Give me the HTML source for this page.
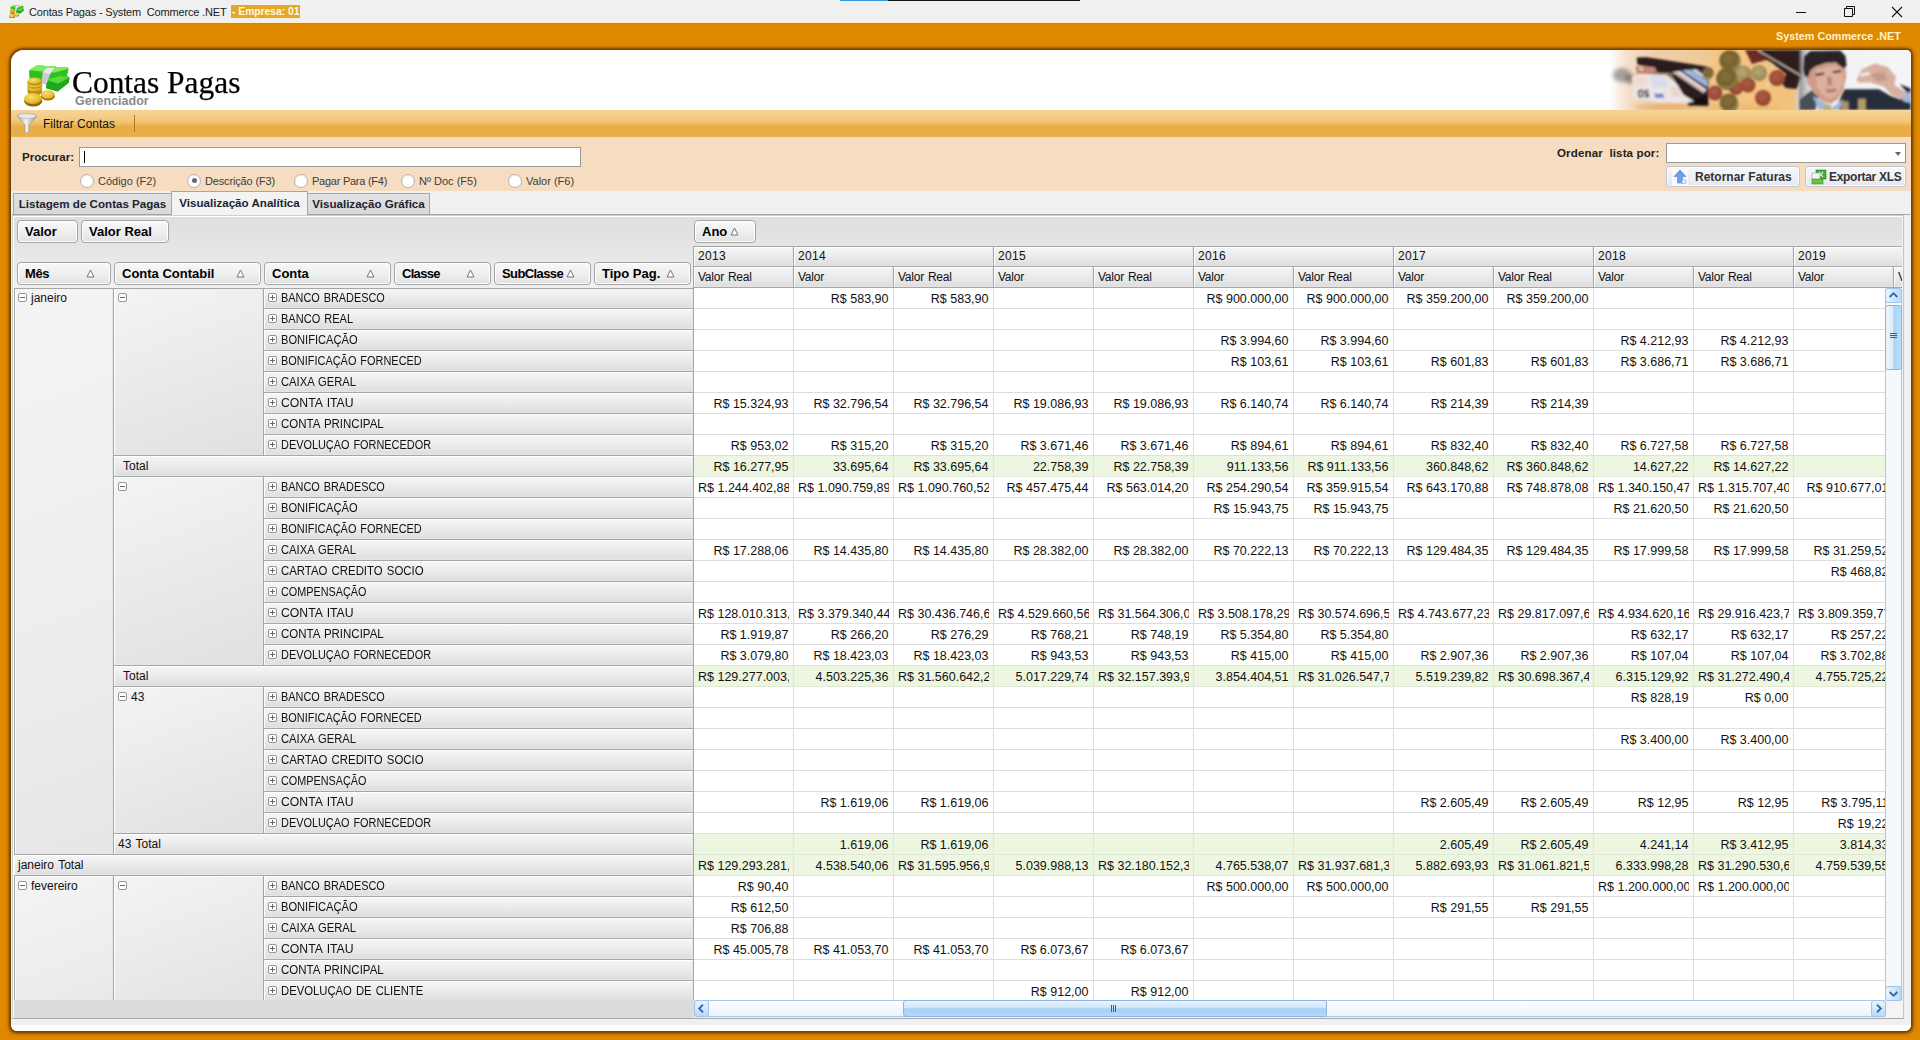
<!DOCTYPE html>
<html><head><meta charset="utf-8"><title>Contas Pagas</title>
<style>
*{box-sizing:border-box}
html,body{margin:0;padding:0}
body{width:1920px;height:1040px;overflow:hidden;position:relative;background:#e08800;font-family:"Liberation Sans",sans-serif;font-size:12px;color:#000}
div,span,i,b,svg{position:absolute}
#tb{left:0;top:0;width:1920px;height:24px;background:#f0f0f0;border-bottom:1px solid #c9851f;box-shadow:inset 0 -1px 0 #fff1c7}
#tb .t{left:29px;top:5px;font-size:11px;letter-spacing:-.17px;white-space:pre;color:#1a1a1a;line-height:15px}
#tb .e{left:231px;top:5px;height:13px;width:69px;background:#e5a825;color:#fff8e0;font-weight:bold;font-size:10.3px;line-height:13px;white-space:pre;padding-left:1px;overflow:hidden}
#sc{left:1776px;top:30px;font-size:10.8px;font-weight:bold;color:#fff2c6;white-space:pre;line-height:13px}
#panel{left:11px;top:50px;width:1900px;height:981px;background:#f0f0f0;border-radius:13px 5px 6px 6px;box-shadow:0 0 2.5px 1.2px rgba(92,52,0,.8),0 1px 5px 1px rgba(110,60,0,.5);overflow:hidden}
#hdr{left:0;top:0;width:1900px;height:60px;background:#fff}
#ttl{left:60.5px;top:14.5px;font-family:"Liberation Serif",serif;font-size:30.8px;line-height:36px;white-space:pre;color:#000;transform:scaleX(1.02);transform-origin:0 50%;-webkit-text-stroke:.25px #000}
#sub{left:64px;top:44px;font-size:12.5px;font-weight:bold;color:#8a8a8a;line-height:14px;white-space:pre}
#tool{left:0;top:60px;width:1900px;height:27px;background:linear-gradient(#f6d397 0,#f3c981 35%,#eeb85c 55%,#e9ac47 60%,#eaae4a 100%)}
#tool .t{left:32px;top:7px;font-size:12px;line-height:15px;white-space:pre;color:#111}
#tool .sep{left:123px;top:5px;width:1px;height:17px;background:#b07a20}
#srch{left:0;top:87px;width:1900px;height:54px;background:#f6ddc1}
.lb{font-weight:bold;font-size:11.6px;white-space:pre;color:#222;line-height:14px}
#inp{left:68px;top:97px;width:502px;height:20px;background:#fff;border:1px solid #9a9a9a}
#inp i{left:4px;top:3px;width:1px;height:12px;background:#000}
.rd{width:14px;height:14px;margin:-.5px 0 0 -1px;border-radius:50%;background:#fff;border:1px solid #b4b4b4;box-shadow:inset 0 1px 1px rgba(0,0,0,.08)}
.rd.on:after{content:"";position:absolute;left:3.5px;top:3.5px;width:5px;height:5px;border-radius:50%;background:#6a6a6a}
.rl{font-size:11px;white-space:pre;color:#3c3c3c;line-height:14px}
#cmb{left:1655px;top:93px;width:240px;height:20px;background:#fff;border:1px solid #9a9a9a}
#cmb:after{content:"";position:absolute;right:4px;top:8px;border:3.5px solid transparent;border-top:4px solid #666;border-bottom:0}
.btn{height:21px;top:116px;border:1px solid #c3c7d1;border-radius:3px;background:linear-gradient(#f7f8fa,#e6e8ee);box-shadow:inset 0 0 0 1px rgba(255,255,255,.7)}
.btn b{font-size:12px;white-space:pre;color:#333;line-height:19px;top:1px}
.tab{top:143px;height:22px;background:linear-gradient(#e2e2e2,#d8d8d8);border:1px solid #a6a6a6;border-bottom:0;font-weight:bold;font-size:11.6px;white-space:pre;color:#1c2433;line-height:20px;text-align:center}
.tab.on{top:141px;height:24px;background:#f3f3f3;line-height:21px;z-index:3}
#tl{left:1px;top:164px;width:1898px;height:1px;background:#a2a2a2}
/* grid */
#grid{left:0;top:0;width:1920px;height:1040px}
#gbg{left:12px;top:215px;width:1892px;height:804px;background:#f0f0f0;border:1px solid #cfcfcf;border-bottom-color:#a8a8a8;border-right-color:#c6c6c6}
#ghd{left:14px;top:217px;width:1888px;height:71px;background:linear-gradient(#dedede,#efefef)}
#ghw{left:13px;top:216px;width:1890px;height:1px;background:#fff}
#ghl{left:13px;top:216px;width:1px;height:802px;background:#fff}
#data{left:694px;top:288px;width:1192px;height:712px;overflow:hidden;background:#fff}
#dl{left:693px;top:246px;width:1px;height:755px;background:#a6a6a6}
.dr{left:0;height:21px;width:1300px}
.c{position:relative;float:left;width:100px;height:21px;border-right:1px solid #dedede;border-bottom:1px solid #dedede;padding:0 4px;font-size:12.5px;line-height:20px;color:#111}
.c span{position:static;display:block;overflow:hidden;white-space:pre;text-align:right;height:20px;line-height:22px}
.c span{padding-right:.5px}
.c.o span{text-align:left;padding-right:0}
.tot .c{background:#ecf6e0;border-color:#dfe8d5}
#rh{left:14px;top:288px;width:680px;height:712px;overflow:hidden;background:#e9e9e9}
.h{word-spacing:1px;background:linear-gradient(#f6f6f6,#ececec 45%,#dddddd);border:1px solid #a6a6a6;border-left:0;border-top:0;box-shadow:inset 1px 1px 0 #fff,inset -1px -1px 0 #e6e6e6;white-space:pre;line-height:20px;font-size:12px;color:#111}
#rh .h{border-top:1px solid #a6a6a6;margin-top:0}
.ct{left:250px;width:430px;height:22px}
.t1{left:100px;width:580px;height:22px}
.t0{left:0;width:680px;height:22px}
.cc{left:100px;width:150px;background:linear-gradient(160deg,#f4f4f4,#e6e6e6 70%,#e0e0e0)}
.ms{left:0;width:100px;background:linear-gradient(160deg,#f4f4f4,#ececec 70%,#e6e6e6);border-left:1px solid #a6a6a6}
.l{left:4px;top:0}
.ct .u{left:17px;top:0;transform:scaleX(.908);transform-origin:0 50%}
.t1 .l{left:9px;top:0}
.t1b .l{left:4px;top:0}
.t0 .l{left:4px;top:0}
.cc .l,.ms .l{left:17px;top:0}
.ms .pm{left:3px}
.ms .l{left:16px}
.pm{left:4px;top:5px;width:9px;height:9px;border:1px solid #969696;border-radius:2px;background:#fff}
.pm:before{content:"";position:absolute;left:1px;top:3px;width:5px;height:1px;background:#666}
.pm.p:after{content:"";position:absolute;left:3px;top:1px;width:1px;height:5px;background:#666}
#chdr{left:694px;top:246px;width:1208px;height:42px;overflow:hidden;border-top:1px solid #a6a6a6}
.yh{top:0;height:20px;line-height:18px;letter-spacing:.3px}
.vh{top:20px;height:21px;width:100px;line-height:21px;letter-spacing:-.25px}
.fb{height:23px;border:1px solid #a4a4a4;border-radius:4px;background:linear-gradient(#f8f8f8,#efefef 50%,#e2e2e2);box-shadow:inset 0 0 0 1px #fff}
.fb b{left:7px;top:0;font-size:13px;line-height:21px;white-space:pre;color:#000}
.fb .tri{top:6px}

</style></head>
<body>
<div id="tb">
<svg style="left:9px;top:4.5px" width="15" height="13.7" viewBox="24 65 46 42"><use href="#bigicon"/></svg>
<span class="t">Contas Pagas - System  Commerce .NET</span>
<span class="e">- Empresa: 01</span>
<div style="left:840px;top:0;width:48px;height:1px;background:#2f9be0"></div>
<div style="left:888px;top:0;width:192px;height:1px;background:#111"></div>
<svg style="left:1790px;top:2px" width="120" height="20" viewBox="0 0 120 20"><g stroke="#111" stroke-width="1" fill="none"><path d="M6 10.5 H16"/><path d="M54.5 6.5 H62.5 V14.5 H54.5 Z"/><path d="M56.5 6.5 V4.5 H64.5 V12.5 H62.5"/><path d="M102 5 L112 15 M112 5 L102 15" stroke-width="1.1"/></g></svg>
</div>
<span id="sc">System Commerce .NET</span>
<div id="panel">
<div id="hdr">
<svg style="left:11px;top:12px" width="50" height="48" viewBox="22 62 50 48">
<defs><linearGradient id="gg" x1="0" y1="0" x2="0" y2="1"><stop offset="0" stop-color="#5fe03c"/><stop offset="1" stop-color="#1fa51a"/></linearGradient><radialGradient id="gc" cx=".4" cy=".35" r=".75"><stop offset="0" stop-color="#f8e068"/><stop offset=".7" stop-color="#e3b92e"/><stop offset="1" stop-color="#a87c10"/></radialGradient><filter id="ib"><feGaussianBlur stdDeviation=".35"/></filter></defs>
<g id="bigicon" filter="url(#ib)">
<path d="M29.4 70 L36.4 65.4 L43.9 65.4 L45 66.3 L55.4 66.3 L56.5 67.1 L67.5 67.1 L68.7 68.6 L66.9 75.2 L69.5 77.5 L68.7 82.7 L57.7 91.4 L46.2 88.2 L46.2 83.9 L29.4 78.7 Z" fill="url(#gg)"/>
<path d="M29.4 70 L36.4 65.4 L43.9 65.4 L45 66.3 L55.4 66.3 L56.5 67.1 L67.5 67.1 L68.7 68.6 L54 72.5 Z" fill="#7cec5a"/>
<path d="M29.4 70.6 L54 73 L68.5 69 L66.9 75.2 L52 79 L29.4 76 Z" fill="#2fc024"/>
<path d="M46.5 80.5 L58 84 L69.5 77.5 L68.7 82.7 L57.7 91.4 L46.2 88.2 Z" fill="#1faa1c"/>
<path d="M47 79.5 L60 76 L69 77.4 L58 83.6 Z" fill="#58dc3e"/>
<path d="M42.7 72.3 L47.3 67.7 L54.2 68.3 L50.2 74 L46.2 85 L41.5 83.3 Z" fill="#c9cbcf"/>
<path d="M42.7 72.3 L47.3 67.7 L54.2 68.3 L50.2 74 Z" fill="#e6e7ea"/>
<rect x="27.6" y="81" width="14.5" height="11" fill="#d9a820"/>
<ellipse cx="34.8" cy="92" rx="7.3" ry="3.4" fill="#b88a14"/>
<ellipse cx="34.8" cy="89" rx="7.3" ry="3.4" fill="#c8981a"/><ellipse cx="34.8" cy="87.8" rx="7.3" ry="3.4" fill="url(#gc)"/>
<ellipse cx="34.8" cy="85.6" rx="7.3" ry="3.4" fill="#c8981a"/><ellipse cx="34.8" cy="84.4" rx="7.3" ry="3.4" fill="url(#gc)"/>
<ellipse cx="34.6" cy="82.2" rx="7" ry="3.2" fill="#b88a14"/><ellipse cx="34.6" cy="81" rx="7" ry="3.2" fill="url(#gc)"/>
<ellipse cx="47.9" cy="96.2" rx="6.9" ry="4.4" fill="#96700c"/><ellipse cx="47.9" cy="94.6" rx="6.9" ry="4.4" fill="url(#gc)"/>
<ellipse cx="33.2" cy="101.2" rx="9" ry="5.4" fill="#8c680a"/><ellipse cx="32.9" cy="98.6" rx="8.8" ry="5.6" fill="url(#gc)"/>
</g>
</svg>
<span id="ttl">Contas Pagas</span>
<span id="sub">Gerenciador</span>
<!--BANNER--><svg id="ban" style="left:1589px;top:0" width="311" height="60" viewBox="1600 50 311 60">
<defs>
<filter id="b1" x="-10%" y="-10%" width="120%" height="120%"><feGaussianBlur stdDeviation="0.8"/></filter>
<filter id="b2" x="-30%" y="-30%" width="160%" height="160%"><feGaussianBlur stdDeviation="2.2"/></filter>
<linearGradient id="bl" x1="0" y1="0" x2="1" y2="0"><stop offset="0" stop-color="#fff"/><stop offset=".03" stop-color="#fff"/><stop offset=".09" stop-color="#f5e0c9"/><stop offset=".18" stop-color="#eecfac"/><stop offset=".33" stop-color="#efc998"/><stop offset=".38" stop-color="#f2c684"/><stop offset=".62" stop-color="#f1c27c"/><stop offset=".645" stop-color="#d8d4d2"/><stop offset=".7" stop-color="#f1f1f3"/><stop offset="1" stop-color="#f5f5f7"/></linearGradient>
<linearGradient id="ms" x1="0" y1="0" x2="1" y2="0"><stop offset="0" stop-color="#77787e" stop-opacity=".75"/><stop offset="1" stop-color="#c0c0c6" stop-opacity="0"/></linearGradient>
<radialGradient id="cg" cx=".45" cy=".4" r=".6"><stop offset="0" stop-color="#86703c"/><stop offset=".68" stop-color="#74602f"/><stop offset=".86" stop-color="#a48c4c"/><stop offset="1" stop-color="#5e4c22"/></radialGradient>
<radialGradient id="cl" cx=".45" cy=".4" r=".6"><stop offset="0" stop-color="#b8aa74"/><stop offset="1" stop-color="#968650"/></radialGradient>
<radialGradient id="cc" cx=".45" cy=".4" r=".6"><stop offset="0" stop-color="#ac5e46"/><stop offset="1" stop-color="#92452e"/></radialGradient>
<clipPath id="bc"><rect x="1600" y="50" width="311" height="60"/></clipPath>
</defs>
<g clip-path="url(#bc)">
<rect x="1600" y="50" width="311" height="60" fill="url(#bl)"/>
<g filter="url(#b2)"><ellipse cx="1622" cy="75" rx="9" ry="7" fill="#8a8686" opacity=".75"/><ellipse cx="1630" cy="79" rx="5" ry="5" fill="#6e6a6a" opacity=".7"/><ellipse cx="1665" cy="107" rx="32" ry="3" fill="#e39a44" opacity=".6"/><path d="M1640 60 L1700 68 L1708 76 L1707 104 L1690 102 L1672 80 L1645 72 Z" fill="#2b1c1b" opacity=".55"/><ellipse cx="1740" cy="108" rx="40" ry="4" fill="#eeb060" opacity=".5"/></g>
<g filter="url(#b1)">
<path d="M1636.7 57.6 L1646.7 57.2 L1707.5 66.8 L1707.5 73.0 L1675.0 72.2 L1658.3 72.2 L1655.0 67.2 L1637.5 64.7 Z" fill="#2b1c1b"/>
<path d="M1670.8 70.5 L1707.5 69.7 L1708.3 105.5 L1698.3 105.5 L1683.3 94.7 L1678.3 87.2 Z" fill="#2b1c1b"/>
<path d="M1686.7 101.3 L1707.5 94.7 L1708.3 105.5 L1688.3 105.5 Z" fill="#1a1010"/>
<path d="M1635.8 65.9 L1655.0 67.6 L1654.6 73.0 L1636.7 73.8 Z" fill="#c08078"/>
<path d="M1639.2 67.6 L1643.3 67.8 L1643.3 70.5 L1639.2 70.3 Z" fill="#e8d0b0"/>
<path d="M1646.7 68.0 L1653.3 68.5 L1653.3 70.5 L1646.7 70.3 Z" fill="#e08a70"/>
<path d="M1672.5 72.2 L1680.0 70.9 L1706.7 89.7 L1703.3 93.0 Z" fill="#e6dcdc"/>
<path d="M1675.0 73.8 L1677.5 73.0 L1704.2 91.3 L1703.3 93.0 Z" fill="#c8a8a8"/>
<path d="M1681.7 70.5 L1690.0 69.7 L1707.5 81.3 L1707.5 87.2 Z" fill="#9dbadf"/>
<path d="M1690.8 69.7 L1696.7 69.5 L1707.5 76.3 L1707.5 80.5 Z" fill="#e2e4ec"/>
<path d="M1695.8 70.3 L1704.2 73.0 L1707.5 75.9 L1707.5 77.2 Z" fill="#3456a6"/>
<path d="M1632.1 76.3 L1646.7 74.7 L1666.7 74.7 L1677.5 84.7 L1683.3 94.7 L1694.2 101.3 L1686.7 103.0 L1658.3 102.2 L1633.3 98.0 Z" fill="#ebe5e5"/>
<path d="M1632.9 77.2 L1646.7 75.5 L1647.5 84.7 L1633.3 86.3 Z" fill="#f0dccc"/>
<path d="M1650.0 76.3 L1665.0 76.3 L1668.3 87.2 L1653.3 87.2 Z" fill="#d8dcee"/>
<path d="M1670.0 86.3 L1677.5 87.2 L1681.7 97.2 L1672.5 96.3 Z" fill="#ecd2ca"/>
<path d="M1637.9 90.5 L1641.7 89.2 L1643.3 91.3 L1643.3 96.8 L1639.6 97.8 L1637.9 95.5 Z" fill="#38302f"/>
<path d="M1639.6 91.3 L1641.7 90.9 L1641.8 95.9 L1639.8 96.3 Z" fill="#ebe5e5"/>
<path d="M1644.6 90.1 L1648.8 89.7 L1648.8 91.3 L1646.2 91.7 L1646.3 93.0 L1649.2 93.4 L1649.0 97.2 L1644.6 97.6 L1644.6 95.9 L1647.3 95.5 L1647.2 94.7 L1644.6 94.3 Z" fill="#38302f"/>
<path d="M1654.2 93.4 L1663.3 93.8 L1664.2 98.0 L1655.0 97.8 Z" fill="#7686d0"/>
<circle cx="1708" cy="73" r="6" fill="url(#cg)"/>
<path d="M1745 50 L1801 50 L1801.5 76 L1796.5 89 L1786 88 L1782.5 84 L1786 74 L1770.6 61.7 Z" fill="#2d1c1a"/>
<path d="M1745 50 L1760 50 L1766 60 L1752 64 Z" fill="#6a2c28"/>
<path d="M1758 50.5 L1801.5 76" stroke="#d8d0cc" stroke-width="1.2" fill="none"/>
<circle cx="1769.8" cy="67.8" r="2.4" fill="#e0c4a8"/>
<circle cx="1730" cy="61" r="10.8" fill="url(#cg)"/>
<circle cx="1743" cy="74" r="8.5" fill="url(#cl)"/>
<circle cx="1748" cy="85" r="7.5" fill="url(#cc)"/>
<circle cx="1736" cy="88" r="7" fill="url(#cc)"/>
<circle cx="1727" cy="79" r="11" fill="url(#cg)"/>
<circle cx="1715" cy="93" r="7.5" fill="url(#cc)"/>
<circle cx="1729" cy="103" r="9.5" fill="url(#cg)"/>
<circle cx="1759" cy="73" r="8" fill="url(#cl)"/>
<circle cx="1777" cy="78" r="8" fill="url(#cc)"/>
<circle cx="1763" cy="98" r="8" fill="url(#cc)"/>
<circle cx="1767.5" cy="84" r="1.7" fill="#d8d8d8"/>
<circle cx="1759" cy="98" r="0" fill="#000"/>
</g>
<g filter="url(#b1)">
<rect x="1799" y="50" width="14" height="60" fill="url(#ms)"/>
<path d="M1799.8 99.5 L1811.9 90.1 L1818.7 96.1 L1815.3 109.9 L1799.8 109.9 Z" fill="#4a4f58"/>
<path d="M1835.9 109.9 L1841.1 96.1 L1844.5 89.2 L1878.9 89.2 L1890.9 96.1 L1910.7 103.0 L1910.7 109.9 Z" fill="#262f3b"/>
<path d="M1812.7 96.1 L1818.7 109.9 L1839.3 109.9 L1843.6 98.7 L1832.5 107.3 Z" fill="#a3b8d8"/>
<path d="M1805.0 72.1 L1810.1 65.2 L1835.9 60.9 L1845.4 65.2 L1846.2 76.4 L1843.6 89.2 L1837.6 99.5 L1830.8 103.8 L1822.2 101.3 L1813.6 92.7 L1807.6 82.4 Z" fill="#cc9c88"/>
<path d="M1815.3 70.3 L1835.9 65.2 L1843.6 70.3 L1843.6 82.4 L1837.6 94.4 L1829.9 99.5 L1823.0 96.1 L1817.0 87.5 Z" fill="#dcb09c"/>
<path d="M1805.0 76.4 L1803.3 70.3 L1804.1 56.6 L1810.1 51.0 L1840.2 50.4 L1845.4 55.7 L1846.6 66.0 L1843.2 68.6 L1835.9 62.2 L1825.6 63.0 L1815.3 66.5 L1810.1 70.8 L1808.4 76.8 Z" fill="#2c2325"/>
<path d="M1815.3 73.8 L1823.9 72.5 L1824.3 74.6 L1816.2 75.9 Z" fill="#3a2a28"/>
<path d="M1832.5 71.2 L1841.1 69.9 L1841.5 72.1 L1833.3 73.3 Z" fill="#3a2a28"/>
<path d="M1827.3 76.4 L1830.8 76.4 L1832.5 84.9 L1827.3 85.8 Z" fill="#b88674"/>
<path d="M1825.6 89.2 L1836.8 88.4 L1835.9 91.8 L1827.3 92.7 Z" fill="#b87878"/>
<path d="M1856.5 79.8 L1861.7 69.5 L1874.6 63.5 L1887.5 66.9 L1896.0 76.4 L1894.3 84.9 L1907.2 92.7 L1901.2 99.5 L1890.9 94.4 L1884.0 86.7 L1870.3 82.4 L1858.2 82.4 Z" fill="#d8b0a0"/>
<path d="M1870.3 73.8 L1884.0 72.1 L1887.5 80.6 L1877.1 81.5 Z" fill="#c49a88"/>
<path d="M1860.4 73.8 L1869.4 72.1 L1869.8 74.6 L1860.8 76.4 Z" fill="#f6f2f2"/>
<path d="M1899.5 84.1 L1910.7 88.4 L1910.7 103.8 L1901.2 99.5 L1907.2 92.7 Z" fill="#222a36"/>
<path d="M1901.2 94.8 L1910.7 91.8 L1910.7 103.0 L1903.4 101.3 Z" fill="#a9b9d6"/>
<rect x="1823.9" y="104.7" width="7" height="6" fill="#c0ac78"/>
<rect x="1841.1" y="101.3" width="7.5" height="9" fill="#a8926a"/>
<rect x="1858.2" y="98.7" width="7.5" height="12" fill="#b49c6a"/>
</g>
</g>
</svg><!--/BANNER-->
</div>
<div id="tool">
<svg style="left:5px;top:2px" width="22" height="23" viewBox="0 0 22 23"><defs><linearGradient id="fg" x1="0" y1="0" x2="1" y2="0"><stop offset="0" stop-color="#9a9a9a"/><stop offset=".45" stop-color="#f4f4f4"/><stop offset="1" stop-color="#8c8c8c"/></linearGradient></defs><path d="M1 4 C1 1.5 21 1.5 21 4 L13 13 L13 20 C13 21.5 9 21.5 9 20 L9 13 Z" fill="url(#fg)" stroke="#8a8a8a" stroke-width=".5"/><ellipse cx="11" cy="4" rx="9.5" ry="2.3" fill="#e9e9e9" stroke="#a0a0a0" stroke-width=".5"/></svg>
<span class="t">Filtrar Contas</span>
<div class="sep"></div>
</div>
<div id="srch"></div>
<span class="lb" style="left:11px;top:100px">Procurar:</span>
<div id="inp"><i></i></div>
<div class="rd" style="left:70px;top:124px"></div><span class="rl" style="left:87px;top:124px">Código (F2)</span>
<div class="rd on" style="left:177px;top:124px"></div><span class="rl" style="left:194px;top:124px;letter-spacing:-.15px">Descrição (F3)</span>
<div class="rd" style="left:284px;top:124px"></div><span class="rl" style="left:301px;top:124px;letter-spacing:-.25px">Pagar Para (F4)</span>
<div class="rd" style="left:391px;top:124px"></div><span class="rl" style="left:408px;top:124px">Nº Doc (F5)</span>
<div class="rd" style="left:498px;top:124px"></div><span class="rl" style="left:515px;top:124px">Valor (F6)</span>
<span class="lb" style="left:1546px;top:96px;letter-spacing:.1px">Ordenar  lista por:</span>
<div id="cmb"></div>
<div class="btn" style="left:1655px;width:134px"><svg style="left:5px;top:2px" width="16" height="16" viewBox="0 0 16 16"><rect x="0" y="0" width="16" height="16" fill="#fff" opacity=".7"/><path d="M8 1 L14 7.5 L10.5 7.5 L10.5 14 L5.5 14 L5.5 7.5 L2 7.5 Z" fill="#6d9fe8" stroke="#4a7fd0" stroke-width=".6"/><path d="M10 11 h4 v3.5 h-4z" fill="#e8eef8" stroke="#7a9ad0" stroke-width=".5"/></svg><b style="left:28px">Retornar Faturas</b></div>
<div class="btn" style="left:1794px;width:101px"><svg style="left:5px;top:2px" width="16" height="16" viewBox="0 0 16 16"><rect x="5" y="1" width="10" height="9" fill="#3fae3a" stroke="#2a7d28" stroke-width=".6"/><path d="M8 3 l4 5 M12 3 l-4 5" stroke="#e8ffe0" stroke-width="1.2"/><rect x="1" y="4" width="8" height="7" fill="#f4f4f4" stroke="#9a9a9a" stroke-width=".6"/><rect x="1" y="10" width="11" height="5" fill="#6cc04a" stroke="#3a8a2a" stroke-width=".6"/></svg><b style="left:23px;letter-spacing:-.3px">Exportar XLS</b></div>
<div class="tab" style="left:2px;width:159px">Listagem de Contas Pagas</div>
<div class="tab on" style="left:160px;width:137px">Visualização Analítica</div>
<div class="tab" style="left:296px;width:123px">Visualização Gráfica</div>
<div id="tl"></div>
<div style="left:0;top:975px;width:1900px;height:6px;background:#fff"></div>
</div>
<div id="grid">
<div id="gbg"></div><div id="ghd"></div><div id="ghw"></div><div id="ghl"></div><div id="dl"></div>
<div id="data">
<div class="dr" style="top:0px"><div class="c"></div><div class="c"><span>R$ 583,90</span></div><div class="c"><span>R$ 583,90</span></div><div class="c"></div><div class="c"></div><div class="c"><span>R$ 900.000,00</span></div><div class="c"><span>R$ 900.000,00</span></div><div class="c"><span>R$ 359.200,00</span></div><div class="c"><span>R$ 359.200,00</span></div><div class="c"></div><div class="c"></div><div class="c"></div><div class="c"></div></div>
<div class="dr" style="top:21px"><div class="c"></div><div class="c"></div><div class="c"></div><div class="c"></div><div class="c"></div><div class="c"></div><div class="c"></div><div class="c"></div><div class="c"></div><div class="c"></div><div class="c"></div><div class="c"></div><div class="c"></div></div>
<div class="dr" style="top:42px"><div class="c"></div><div class="c"></div><div class="c"></div><div class="c"></div><div class="c"></div><div class="c"><span>R$ 3.994,60</span></div><div class="c"><span>R$ 3.994,60</span></div><div class="c"></div><div class="c"></div><div class="c"><span>R$ 4.212,93</span></div><div class="c"><span>R$ 4.212,93</span></div><div class="c"></div><div class="c"></div></div>
<div class="dr" style="top:63px"><div class="c"></div><div class="c"></div><div class="c"></div><div class="c"></div><div class="c"></div><div class="c"><span>R$ 103,61</span></div><div class="c"><span>R$ 103,61</span></div><div class="c"><span>R$ 601,83</span></div><div class="c"><span>R$ 601,83</span></div><div class="c"><span>R$ 3.686,71</span></div><div class="c"><span>R$ 3.686,71</span></div><div class="c"></div><div class="c"></div></div>
<div class="dr" style="top:84px"><div class="c"></div><div class="c"></div><div class="c"></div><div class="c"></div><div class="c"></div><div class="c"></div><div class="c"></div><div class="c"></div><div class="c"></div><div class="c"></div><div class="c"></div><div class="c"></div><div class="c"></div></div>
<div class="dr" style="top:105px"><div class="c"><span>R$ 15.324,93</span></div><div class="c"><span>R$ 32.796,54</span></div><div class="c"><span>R$ 32.796,54</span></div><div class="c"><span>R$ 19.086,93</span></div><div class="c"><span>R$ 19.086,93</span></div><div class="c"><span>R$ 6.140,74</span></div><div class="c"><span>R$ 6.140,74</span></div><div class="c"><span>R$ 214,39</span></div><div class="c"><span>R$ 214,39</span></div><div class="c"></div><div class="c"></div><div class="c"></div><div class="c"></div></div>
<div class="dr" style="top:126px"><div class="c"></div><div class="c"></div><div class="c"></div><div class="c"></div><div class="c"></div><div class="c"></div><div class="c"></div><div class="c"></div><div class="c"></div><div class="c"></div><div class="c"></div><div class="c"></div><div class="c"></div></div>
<div class="dr" style="top:147px"><div class="c"><span>R$ 953,02</span></div><div class="c"><span>R$ 315,20</span></div><div class="c"><span>R$ 315,20</span></div><div class="c"><span>R$ 3.671,46</span></div><div class="c"><span>R$ 3.671,46</span></div><div class="c"><span>R$ 894,61</span></div><div class="c"><span>R$ 894,61</span></div><div class="c"><span>R$ 832,40</span></div><div class="c"><span>R$ 832,40</span></div><div class="c"><span>R$ 6.727,58</span></div><div class="c"><span>R$ 6.727,58</span></div><div class="c"></div><div class="c"></div></div>
<div class="dr tot" style="top:168px"><div class="c"><span>R$ 16.277,95</span></div><div class="c"><span>33.695,64</span></div><div class="c"><span>R$ 33.695,64</span></div><div class="c"><span>22.758,39</span></div><div class="c"><span>R$ 22.758,39</span></div><div class="c"><span>911.133,56</span></div><div class="c"><span>R$ 911.133,56</span></div><div class="c"><span>360.848,62</span></div><div class="c"><span>R$ 360.848,62</span></div><div class="c"><span>14.627,22</span></div><div class="c"><span>R$ 14.627,22</span></div><div class="c"></div><div class="c"></div></div>
<div class="dr" style="top:189px"><div class="c o"><span>R$ 1.244.402,88</span></div><div class="c o"><span>R$ 1.090.759,89</span></div><div class="c o"><span>R$ 1.090.760,52</span></div><div class="c"><span>R$ 457.475,44</span></div><div class="c"><span>R$ 563.014,20</span></div><div class="c"><span>R$ 254.290,54</span></div><div class="c"><span>R$ 359.915,54</span></div><div class="c"><span>R$ 643.170,88</span></div><div class="c"><span>R$ 748.878,08</span></div><div class="c o"><span>R$ 1.340.150,47</span></div><div class="c o"><span>R$ 1.315.707,40</span></div><div class="c"><span>R$ 910.677,01</span></div><div class="c"></div></div>
<div class="dr" style="top:210px"><div class="c"></div><div class="c"></div><div class="c"></div><div class="c"></div><div class="c"></div><div class="c"><span>R$ 15.943,75</span></div><div class="c"><span>R$ 15.943,75</span></div><div class="c"></div><div class="c"></div><div class="c"><span>R$ 21.620,50</span></div><div class="c"><span>R$ 21.620,50</span></div><div class="c"></div><div class="c"></div></div>
<div class="dr" style="top:231px"><div class="c"></div><div class="c"></div><div class="c"></div><div class="c"></div><div class="c"></div><div class="c"></div><div class="c"></div><div class="c"></div><div class="c"></div><div class="c"></div><div class="c"></div><div class="c"></div><div class="c"></div></div>
<div class="dr" style="top:252px"><div class="c"><span>R$ 17.288,06</span></div><div class="c"><span>R$ 14.435,80</span></div><div class="c"><span>R$ 14.435,80</span></div><div class="c"><span>R$ 28.382,00</span></div><div class="c"><span>R$ 28.382,00</span></div><div class="c"><span>R$ 70.222,13</span></div><div class="c"><span>R$ 70.222,13</span></div><div class="c"><span>R$ 129.484,35</span></div><div class="c"><span>R$ 129.484,35</span></div><div class="c"><span>R$ 17.999,58</span></div><div class="c"><span>R$ 17.999,58</span></div><div class="c"><span>R$ 31.259,52</span></div><div class="c"></div></div>
<div class="dr" style="top:273px"><div class="c"></div><div class="c"></div><div class="c"></div><div class="c"></div><div class="c"></div><div class="c"></div><div class="c"></div><div class="c"></div><div class="c"></div><div class="c"></div><div class="c"></div><div class="c"><span>R$ 468,82</span></div><div class="c"></div></div>
<div class="dr" style="top:294px"><div class="c"></div><div class="c"></div><div class="c"></div><div class="c"></div><div class="c"></div><div class="c"></div><div class="c"></div><div class="c"></div><div class="c"></div><div class="c"></div><div class="c"></div><div class="c"></div><div class="c"></div></div>
<div class="dr" style="top:315px"><div class="c o"><span>R$ 128.010.313,45</span></div><div class="c o"><span>R$ 3.379.340,44</span></div><div class="c o"><span>R$ 30.436.746,65</span></div><div class="c o"><span>R$ 4.529.660,56</span></div><div class="c o"><span>R$ 31.564.306,01</span></div><div class="c o"><span>R$ 3.508.178,29</span></div><div class="c o"><span>R$ 30.574.696,51</span></div><div class="c o"><span>R$ 4.743.677,23</span></div><div class="c o"><span>R$ 29.817.097,61</span></div><div class="c o"><span>R$ 4.934.620,16</span></div><div class="c o"><span>R$ 29.916.423,77</span></div><div class="c o"><span>R$ 3.809.359,77</span></div><div class="c"></div></div>
<div class="dr" style="top:336px"><div class="c"><span>R$ 1.919,87</span></div><div class="c"><span>R$ 266,20</span></div><div class="c"><span>R$ 276,29</span></div><div class="c"><span>R$ 768,21</span></div><div class="c"><span>R$ 748,19</span></div><div class="c"><span>R$ 5.354,80</span></div><div class="c"><span>R$ 5.354,80</span></div><div class="c"></div><div class="c"></div><div class="c"><span>R$ 632,17</span></div><div class="c"><span>R$ 632,17</span></div><div class="c"><span>R$ 257,22</span></div><div class="c"></div></div>
<div class="dr" style="top:357px"><div class="c"><span>R$ 3.079,80</span></div><div class="c"><span>R$ 18.423,03</span></div><div class="c"><span>R$ 18.423,03</span></div><div class="c"><span>R$ 943,53</span></div><div class="c"><span>R$ 943,53</span></div><div class="c"><span>R$ 415,00</span></div><div class="c"><span>R$ 415,00</span></div><div class="c"><span>R$ 2.907,36</span></div><div class="c"><span>R$ 2.907,36</span></div><div class="c"><span>R$ 107,04</span></div><div class="c"><span>R$ 107,04</span></div><div class="c"><span>R$ 3.702,88</span></div><div class="c"></div></div>
<div class="dr tot" style="top:378px"><div class="c o"><span>R$ 129.277.003,17</span></div><div class="c"><span>4.503.225,36</span></div><div class="c o"><span>R$ 31.560.642,21</span></div><div class="c"><span>5.017.229,74</span></div><div class="c o"><span>R$ 32.157.393,91</span></div><div class="c"><span>3.854.404,51</span></div><div class="c o"><span>R$ 31.026.547,71</span></div><div class="c"><span>5.519.239,82</span></div><div class="c o"><span>R$ 30.698.367,41</span></div><div class="c"><span>6.315.129,92</span></div><div class="c o"><span>R$ 31.272.490,41</span></div><div class="c"><span>4.755.725,22</span></div><div class="c"></div></div>
<div class="dr" style="top:399px"><div class="c"></div><div class="c"></div><div class="c"></div><div class="c"></div><div class="c"></div><div class="c"></div><div class="c"></div><div class="c"></div><div class="c"></div><div class="c"><span>R$ 828,19</span></div><div class="c"><span>R$ 0,00</span></div><div class="c"></div><div class="c"></div></div>
<div class="dr" style="top:420px"><div class="c"></div><div class="c"></div><div class="c"></div><div class="c"></div><div class="c"></div><div class="c"></div><div class="c"></div><div class="c"></div><div class="c"></div><div class="c"></div><div class="c"></div><div class="c"></div><div class="c"></div></div>
<div class="dr" style="top:441px"><div class="c"></div><div class="c"></div><div class="c"></div><div class="c"></div><div class="c"></div><div class="c"></div><div class="c"></div><div class="c"></div><div class="c"></div><div class="c"><span>R$ 3.400,00</span></div><div class="c"><span>R$ 3.400,00</span></div><div class="c"></div><div class="c"></div></div>
<div class="dr" style="top:462px"><div class="c"></div><div class="c"></div><div class="c"></div><div class="c"></div><div class="c"></div><div class="c"></div><div class="c"></div><div class="c"></div><div class="c"></div><div class="c"></div><div class="c"></div><div class="c"></div><div class="c"></div></div>
<div class="dr" style="top:483px"><div class="c"></div><div class="c"></div><div class="c"></div><div class="c"></div><div class="c"></div><div class="c"></div><div class="c"></div><div class="c"></div><div class="c"></div><div class="c"></div><div class="c"></div><div class="c"></div><div class="c"></div></div>
<div class="dr" style="top:504px"><div class="c"></div><div class="c"><span>R$ 1.619,06</span></div><div class="c"><span>R$ 1.619,06</span></div><div class="c"></div><div class="c"></div><div class="c"></div><div class="c"></div><div class="c"><span>R$ 2.605,49</span></div><div class="c"><span>R$ 2.605,49</span></div><div class="c"><span>R$ 12,95</span></div><div class="c"><span>R$ 12,95</span></div><div class="c"><span>R$ 3.795,11</span></div><div class="c"></div></div>
<div class="dr" style="top:525px"><div class="c"></div><div class="c"></div><div class="c"></div><div class="c"></div><div class="c"></div><div class="c"></div><div class="c"></div><div class="c"></div><div class="c"></div><div class="c"></div><div class="c"></div><div class="c"><span>R$ 19,22</span></div><div class="c"></div></div>
<div class="dr tot" style="top:546px"><div class="c"></div><div class="c"><span>1.619,06</span></div><div class="c"><span>R$ 1.619,06</span></div><div class="c"></div><div class="c"></div><div class="c"></div><div class="c"></div><div class="c"><span>2.605,49</span></div><div class="c"><span>R$ 2.605,49</span></div><div class="c"><span>4.241,14</span></div><div class="c"><span>R$ 3.412,95</span></div><div class="c"><span>3.814,33</span></div><div class="c"></div></div>
<div class="dr tot" style="top:567px"><div class="c o"><span>R$ 129.293.281,12</span></div><div class="c"><span>4.538.540,06</span></div><div class="c o"><span>R$ 31.595.956,91</span></div><div class="c"><span>5.039.988,13</span></div><div class="c o"><span>R$ 32.180.152,31</span></div><div class="c"><span>4.765.538,07</span></div><div class="c o"><span>R$ 31.937.681,31</span></div><div class="c"><span>5.882.693,93</span></div><div class="c o"><span>R$ 31.061.821,51</span></div><div class="c"><span>6.333.998,28</span></div><div class="c o"><span>R$ 31.290.530,61</span></div><div class="c"><span>4.759.539,55</span></div><div class="c"></div></div>
<div class="dr" style="top:588px"><div class="c"><span>R$ 90,40</span></div><div class="c"></div><div class="c"></div><div class="c"></div><div class="c"></div><div class="c"><span>R$ 500.000,00</span></div><div class="c"><span>R$ 500.000,00</span></div><div class="c"></div><div class="c"></div><div class="c o"><span>R$ 1.200.000,00</span></div><div class="c o"><span>R$ 1.200.000,00</span></div><div class="c"></div><div class="c"></div></div>
<div class="dr" style="top:609px"><div class="c"><span>R$ 612,50</span></div><div class="c"></div><div class="c"></div><div class="c"></div><div class="c"></div><div class="c"></div><div class="c"></div><div class="c"><span>R$ 291,55</span></div><div class="c"><span>R$ 291,55</span></div><div class="c"></div><div class="c"></div><div class="c"></div><div class="c"></div></div>
<div class="dr" style="top:630px"><div class="c"><span>R$ 706,88</span></div><div class="c"></div><div class="c"></div><div class="c"></div><div class="c"></div><div class="c"></div><div class="c"></div><div class="c"></div><div class="c"></div><div class="c"></div><div class="c"></div><div class="c"></div><div class="c"></div></div>
<div class="dr" style="top:651px"><div class="c"><span>R$ 45.005,78</span></div><div class="c"><span>R$ 41.053,70</span></div><div class="c"><span>R$ 41.053,70</span></div><div class="c"><span>R$ 6.073,67</span></div><div class="c"><span>R$ 6.073,67</span></div><div class="c"></div><div class="c"></div><div class="c"></div><div class="c"></div><div class="c"></div><div class="c"></div><div class="c"></div><div class="c"></div></div>
<div class="dr" style="top:672px"><div class="c"></div><div class="c"></div><div class="c"></div><div class="c"></div><div class="c"></div><div class="c"></div><div class="c"></div><div class="c"></div><div class="c"></div><div class="c"></div><div class="c"></div><div class="c"></div><div class="c"></div></div>
<div class="dr" style="top:693px"><div class="c"></div><div class="c"></div><div class="c"></div><div class="c"><span>R$ 912,00</span></div><div class="c"><span>R$ 912,00</span></div><div class="c"></div><div class="c"></div><div class="c"></div><div class="c"></div><div class="c"></div><div class="c"></div><div class="c"></div><div class="c"></div></div>
</div>
<div id="rh">
<div class="h ct" style="top:-1px"><i class="pm p"></i><span class="u" style="transform:scaleX(0.908)">BANCO BRADESCO</span></div>
<div class="h ct" style="top:20px"><i class="pm p"></i><span class="u" style="transform:scaleX(0.919)">BANCO REAL</span></div>
<div class="h ct" style="top:41px"><i class="pm p"></i><span class="u" style="transform:scaleX(0.926)">BONIFICAÇÃO</span></div>
<div class="h ct" style="top:62px"><i class="pm p"></i><span class="u" style="transform:scaleX(0.912)">BONIFICAÇÃO FORNECED</span></div>
<div class="h ct" style="top:83px"><i class="pm p"></i><span class="u" style="transform:scaleX(0.934)">CAIXA GERAL</span></div>
<div class="h ct" style="top:104px"><i class="pm p"></i><span class="u" style="transform:scaleX(1.019)">CONTA ITAU</span></div>
<div class="h ct" style="top:125px"><i class="pm p"></i><span class="u" style="transform:scaleX(0.958)">CONTA PRINCIPAL</span></div>
<div class="h ct" style="top:146px"><i class="pm p"></i><span class="u" style="transform:scaleX(0.909)">DEVOLUÇAO FORNECEDOR</span></div>
<div class="h t1" style="top:167px"><span class="l">Total</span></div>
<div class="h ct" style="top:188px"><i class="pm p"></i><span class="u" style="transform:scaleX(0.908)">BANCO BRADESCO</span></div>
<div class="h ct" style="top:209px"><i class="pm p"></i><span class="u" style="transform:scaleX(0.926)">BONIFICAÇÃO</span></div>
<div class="h ct" style="top:230px"><i class="pm p"></i><span class="u" style="transform:scaleX(0.912)">BONIFICAÇÃO FORNECED</span></div>
<div class="h ct" style="top:251px"><i class="pm p"></i><span class="u" style="transform:scaleX(0.934)">CAIXA GERAL</span></div>
<div class="h ct" style="top:272px"><i class="pm p"></i><span class="u" style="transform:scaleX(0.95)">CARTAO CREDITO SOCIO</span></div>
<div class="h ct" style="top:293px"><i class="pm p"></i><span class="u" style="transform:scaleX(0.903)">COMPENSAÇÃO</span></div>
<div class="h ct" style="top:314px"><i class="pm p"></i><span class="u" style="transform:scaleX(1.019)">CONTA ITAU</span></div>
<div class="h ct" style="top:335px"><i class="pm p"></i><span class="u" style="transform:scaleX(0.958)">CONTA PRINCIPAL</span></div>
<div class="h ct" style="top:356px"><i class="pm p"></i><span class="u" style="transform:scaleX(0.909)">DEVOLUÇAO FORNECEDOR</span></div>
<div class="h t1" style="top:377px"><span class="l">Total</span></div>
<div class="h ct" style="top:398px"><i class="pm p"></i><span class="u" style="transform:scaleX(0.908)">BANCO BRADESCO</span></div>
<div class="h ct" style="top:419px"><i class="pm p"></i><span class="u" style="transform:scaleX(0.912)">BONIFICAÇÃO FORNECED</span></div>
<div class="h ct" style="top:440px"><i class="pm p"></i><span class="u" style="transform:scaleX(0.934)">CAIXA GERAL</span></div>
<div class="h ct" style="top:461px"><i class="pm p"></i><span class="u" style="transform:scaleX(0.95)">CARTAO CREDITO SOCIO</span></div>
<div class="h ct" style="top:482px"><i class="pm p"></i><span class="u" style="transform:scaleX(0.903)">COMPENSAÇÃO</span></div>
<div class="h ct" style="top:503px"><i class="pm p"></i><span class="u" style="transform:scaleX(1.019)">CONTA ITAU</span></div>
<div class="h ct" style="top:524px"><i class="pm p"></i><span class="u" style="transform:scaleX(0.909)">DEVOLUÇAO FORNECEDOR</span></div>
<div class="h t1 t1b" style="top:545px"><span class="l">43 Total</span></div>
<div class="h t0" style="top:566px"><span class="l">janeiro Total</span></div>
<div class="h ct" style="top:587px"><i class="pm p"></i><span class="u" style="transform:scaleX(0.908)">BANCO BRADESCO</span></div>
<div class="h ct" style="top:608px"><i class="pm p"></i><span class="u" style="transform:scaleX(0.926)">BONIFICAÇÃO</span></div>
<div class="h ct" style="top:629px"><i class="pm p"></i><span class="u" style="transform:scaleX(0.934)">CAIXA GERAL</span></div>
<div class="h ct" style="top:650px"><i class="pm p"></i><span class="u" style="transform:scaleX(1.019)">CONTA ITAU</span></div>
<div class="h ct" style="top:671px"><i class="pm p"></i><span class="u" style="transform:scaleX(0.958)">CONTA PRINCIPAL</span></div>
<div class="h ct" style="top:692px"><i class="pm p"></i><span class="u" style="transform:scaleX(0.94)">DEVOLUÇAO DE CLIENTE</span></div>
<div class="h cc" style="top:-1px;height:169px"><i class="pm m"></i><span class="l"></span></div>
<div class="h cc" style="top:188px;height:190px"><i class="pm m"></i><span class="l"></span></div>
<div class="h cc" style="top:398px;height:148px"><i class="pm m"></i><span class="l">43</span></div>
<div class="h cc" style="top:587px;height:148px"><i class="pm m"></i><span class="l"></span></div>
<div class="h ms" style="top:-1px;height:568px"><i class="pm m"></i><span class="l">janeiro</span></div>
<div class="h ms" style="top:587px;height:148px"><i class="pm m"></i><span class="l">fevereiro</span></div>
<div style="left:0;top:0;width:680px;height:1px;background:#a6a6a6"></div>
</div>
<div id="chdr">
<div class="h yh" style="left:0px;width:100px"><span class="l">2013</span></div><div class="h yh" style="left:100px;width:200px"><span class="l">2014</span></div><div class="h yh" style="left:300px;width:200px"><span class="l">2015</span></div><div class="h yh" style="left:500px;width:200px"><span class="l">2016</span></div><div class="h yh" style="left:700px;width:200px"><span class="l">2017</span></div><div class="h yh" style="left:900px;width:200px"><span class="l">2018</span></div><div class="h yh" style="left:1100px;width:200px"><span class="l">2019</span></div>
<div class="h vh" style="left:0px"><span class="l">Valor Real</span></div><div class="h vh" style="left:100px"><span class="l">Valor</span></div><div class="h vh" style="left:200px"><span class="l">Valor Real</span></div><div class="h vh" style="left:300px"><span class="l">Valor</span></div><div class="h vh" style="left:400px"><span class="l">Valor Real</span></div><div class="h vh" style="left:500px"><span class="l">Valor</span></div><div class="h vh" style="left:600px"><span class="l">Valor Real</span></div><div class="h vh" style="left:700px"><span class="l">Valor</span></div><div class="h vh" style="left:800px"><span class="l">Valor Real</span></div><div class="h vh" style="left:900px"><span class="l">Valor</span></div><div class="h vh" style="left:1000px"><span class="l">Valor Real</span></div><div class="h vh" style="left:1100px"><span class="l">Valor</span></div><div class="h vh" style="left:1200px"><span class="l">Valor Real</span></div>
</div>
<div class="fb " style="left:17px;top:220px;width:61px"><b style="letter-spacing:0px">Valor</b></div>
<div class="fb " style="left:81px;top:220px;width:88px"><b style="letter-spacing:0px">Valor Real</b></div>
<div class="fb " style="left:694px;top:220px;width:62px"><b style="letter-spacing:0px">Ano</b><svg class="tri" style="left:35px" width="9" height="9" viewBox="0 0 9 9"><path d="M4.5 1 L8 8 L1 8 Z" fill="#fff" stroke="#777" stroke-width="1"/></svg></div>
<div class="fb " style="left:17px;top:262px;width:94px"><b style="letter-spacing:-0.4px">Mês</b><svg class="tri" style="left:68px" width="9" height="9" viewBox="0 0 9 9"><path d="M4.5 1 L8 8 L1 8 Z" fill="#fff" stroke="#777" stroke-width="1"/></svg></div>
<div class="fb " style="left:114px;top:262px;width:147px"><b style="letter-spacing:0px">Conta Contabil</b><svg class="tri" style="left:121px" width="9" height="9" viewBox="0 0 9 9"><path d="M4.5 1 L8 8 L1 8 Z" fill="#fff" stroke="#777" stroke-width="1"/></svg></div>
<div class="fb " style="left:264px;top:262px;width:127px"><b style="letter-spacing:0px">Conta</b><svg class="tri" style="left:101px" width="9" height="9" viewBox="0 0 9 9"><path d="M4.5 1 L8 8 L1 8 Z" fill="#fff" stroke="#777" stroke-width="1"/></svg></div>
<div class="fb " style="left:394px;top:262px;width:97px"><b style="letter-spacing:-0.7px">Classe</b><svg class="tri" style="left:71px" width="9" height="9" viewBox="0 0 9 9"><path d="M4.5 1 L8 8 L1 8 Z" fill="#fff" stroke="#777" stroke-width="1"/></svg></div>
<div class="fb " style="left:494px;top:262px;width:97px"><b style="letter-spacing:-0.6px">SubClasse</b><svg class="tri" style="left:71px" width="9" height="9" viewBox="0 0 9 9"><path d="M4.5 1 L8 8 L1 8 Z" fill="#fff" stroke="#777" stroke-width="1"/></svg></div>
<div class="fb " style="left:594px;top:262px;width:97px"><b style="letter-spacing:0px">Tipo Pag.</b><svg class="tri" style="left:71px" width="9" height="9" viewBox="0 0 9 9"><path d="M4.5 1 L8 8 L1 8 Z" fill="#fff" stroke="#777" stroke-width="1"/></svg></div>
<div id="gbgb" style="left:14px;top:1000px;width:680px;height:18px;background:#dcdcdc"></div>
<div id="vs" style="left:1885px;top:288px;width:17px;height:713px;background:#f4f9fe;border:1px solid #a9c7ea;border-radius:3px">
 <div style="left:-1px;top:-1px;width:17px;height:15px;border:1px solid #9fc3ee;border-radius:3px;background:linear-gradient(90deg,#eaf4fd,#b7dbf8)"></div>
 <svg style="left:3px;top:2px" width="9" height="8" viewBox="0 0 9 8"><path d="M.7 6 L4.5 2.2 L8.3 6" fill="none" stroke="#2d62b3" stroke-width="1.8"/></svg>
 <div style="left:-1px;top:16px;width:17px;height:65px;border:1px solid #8db5e2;border-radius:3px;background:linear-gradient(90deg,#eef5fd 0,#dcecfb 45%,#a9d5f9 52%,#b9ddfa 100%)"></div>
 <div style="left:4px;top:44px;width:7px;height:1px;background:#2d62b3;box-shadow:0 2px 0 #2d62b3,0 4px 0 #2d62b3"></div>
 <div style="left:-1px;top:697px;width:17px;height:15px;border:1px solid #9fc3ee;border-radius:3px;background:linear-gradient(90deg,#eaf4fd,#b7dbf8)"></div>
 <svg style="left:3px;top:701px" width="9" height="8" viewBox="0 0 9 8"><path d="M.7 2 L4.5 5.8 L8.3 2" fill="none" stroke="#2d62b3" stroke-width="1.8"/></svg>
</div>
<div id="hs" style="left:694px;top:1000px;width:1192px;height:17px;background:linear-gradient(#fdfeff,#eaf3fc);border:1px solid #a9c7ea;border-radius:3px">
 <div style="left:-1px;top:-1px;width:15px;height:17px;border:1px solid #9fc3ee;border-radius:3px;background:linear-gradient(#eaf4fd,#b7dbf8)"></div>
 <svg style="left:2px;top:3px" width="8" height="9" viewBox="0 0 8 9"><path d="M6 .7 L2.2 4.5 L6 8.3" fill="none" stroke="#2d62b3" stroke-width="1.8"/></svg>
 <div style="left:208px;top:-1px;width:424px;height:17px;border:1px solid #8db5e2;border-radius:3px;background:linear-gradient(#eaf4fd 0,#cfe6fb 45%,#a5d2f8 52%,#b3d9f9 100%)"></div>
 <div style="left:416px;top:4px;width:1px;height:7px;background:#2d62b3;box-shadow:2px 0 0 #2d62b3,4px 0 0 #2d62b3"></div>
 <div style="left:1176px;top:-1px;width:15px;height:17px;border:1px solid #9fc3ee;border-radius:3px;background:linear-gradient(#eaf4fd,#b7dbf8)"></div>
 <svg style="left:1180px;top:3px" width="8" height="9" viewBox="0 0 8 9"><path d="M2 .7 L5.8 4.5 L2 8.3" fill="none" stroke="#2d62b3" stroke-width="1.8"/></svg>
</div>
<div style="left:1886px;top:1001px;width:17px;height:17px;background:#f4f4f4"></div>
</div>
</body></html>
